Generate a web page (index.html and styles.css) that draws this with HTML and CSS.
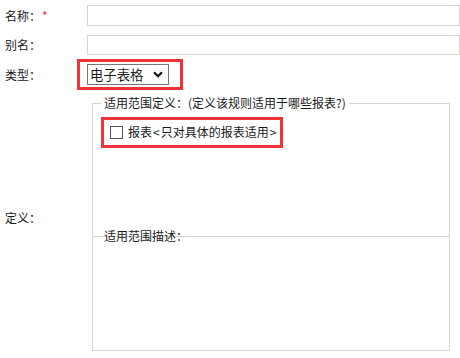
FILE: index.html
```html
<!DOCTYPE html>
<html lang="zh-CN">
<head>
    <meta charset="utf-8">
    <meta name="viewport" content="width=device-width, initial-scale=1">
    <title>报表规则</title>
    <link rel="stylesheet" href="styles.css">
</head>
<body>

    <div class="form">
        <div class="row">
            <label class="lbl" for="name">名称：<span class="req">*</span></label>
            <input class="txt" type="text" id="name">
        </div>

        <div class="row row-alias">
            <label class="lbl" for="alias">别名：</label>
            <input class="txt" type="text" id="alias">
        </div>

        <div class="row row-type">
            <label class="lbl">类型：</label>
            <div class="mark mark-select">
                <div class="select">
                    <span>电子表格</span>
                    <svg width="10" height="7" viewBox="0 0 10 7"><path d="M1 1.2 L5 5.2 L9 1.2" fill="none" stroke="#111" stroke-width="2.2"/></svg>
                </div>
            </div>
        </div>

        <div class="row row-def">
            <label class="lbl lbl-def">定义：</label>
            <div class="scope">
                <fieldset class="scope-top">
                    <legend>适用范围定义：(定义该规则适用于哪些报表?)</legend>
                    <div class="check-area">
                        <label class="mark mark-check">
                            <span class="box"></span>
                            <span>报表<span class="angle">&lt;</span>只对具体的报表适用<span class="angle">&gt;</span></span>
                        </label>
                    </div>
                </fieldset>
                <div class="scope-desc">
                    <span class="desc-title">适用范围描述：</span>
                </div>
            </div>
        </div>
    </div>

</body>
</html>
```

FILE: styles.css
```css
body {
    margin: 0;
    font-family: "Noto Sans CJK SC", sans-serif;
    font-size: 12px;
    color: #1a1a1a;
    background: #fff;
}

.form {
    padding-top: 5px;
}

.row {
    display: flex;
    align-items: center;
}

.lbl {
    flex: none;
    width: 87px;
    padding-left: 5px;
    box-sizing: border-box;
    line-height: 14px;
}

.req {
    color: #e8383d;
    margin-left: 1px;
}

.txt {
    width: 373px;
    height: 21px;
    margin: 0;
    padding: 0 4px;
    box-sizing: border-box;
    border: 1px solid #d8d5cf;
    outline: none;
}

.row-alias {
    margin-top: 9px;
}

.row-alias .txt {
    height: 20px;
}

.row-type {
    margin-top: 4px;
}

/* red highlight frames */
.mark {
    border: 3px solid #ee3438;
}

.mark-select {
    margin-left: -10px;
    padding: 2px 11px 2px 7px;
}

.select {
    width: 82px;
    height: 21px;
    box-sizing: border-box;
    border: 1px solid #767676;
    display: flex;
    align-items: center;
    justify-content: space-between;
    padding: 0 5px 0 2px;
    font-size: 13.33px;
    line-height: 15px;
}

.row-def {
    margin-top: 6px;
}

.lbl-def {
    padding-bottom: 12px;
}

.scope {
    width: 358px;
    margin-left: 5px;
}

.scope-top {
    margin: 0;
    padding: 0 8px;
    border: 1px solid #d8d5cf;
    border-bottom: none;
}

.scope-top legend {
    padding: 0 3px;
    line-height: 14px;
}

.check-area {
    height: 126px;
    padding-top: 7px;
    box-sizing: border-box;
}

.mark-check {
    display: inline-flex;
    align-items: center;
    gap: 5px;
    padding: 5px 3px 6px 6px;
    line-height: 14px;
}

.angle {
    margin: 0 1px;
}

.box {
    width: 13px;
    height: 13px;
    box-sizing: border-box;
    border: 1px solid #555;
}

.scope-desc {
    height: 115px;
    box-sizing: border-box;
    border: 1px solid #d8d5cf;
    padding-left: 11px;
}

.desc-title {
    display: block;
    margin-top: -8px;
    line-height: 14px;
}
```
